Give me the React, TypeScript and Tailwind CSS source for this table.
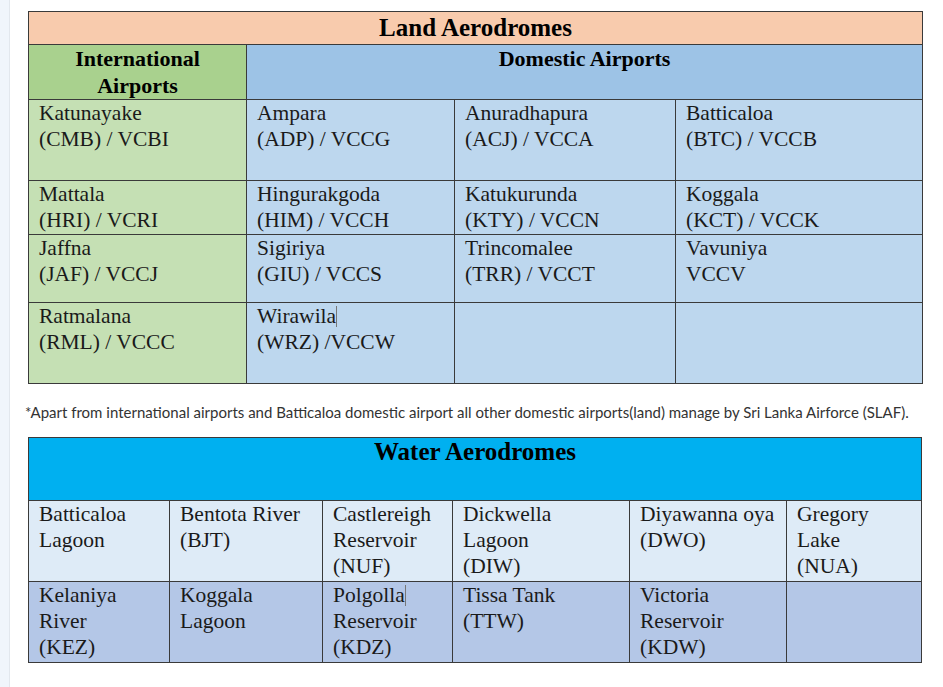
import React from 'react';

type Cell = { name: string; code: string; caret?: boolean };

const landRows: { intl: Cell; dom: (Cell | null)[]; h: string }[] = [
    {
        intl: { name: 'Katunayake', code: '(CMB) / VCBI' },
        dom: [
            { name: 'Ampara', code: '(ADP) / VCCG' },
            { name: 'Anuradhapura', code: '(ACJ) / VCCA' },
            { name: 'Batticaloa', code: '(BTC) / VCCB' },
        ],
        h: 'h-[81px]',
    },
    {
        intl: { name: 'Mattala', code: '(HRI) / VCRI' },
        dom: [
            { name: 'Hingurakgoda', code: '(HIM) / VCCH' },
            { name: 'Katukurunda', code: '(KTY) / VCCN' },
            { name: 'Koggala', code: '(KCT) / VCCK' },
        ],
        h: 'h-[54px]',
    },
    {
        intl: { name: 'Jaffna', code: '(JAF) / VCCJ' },
        dom: [
            { name: 'Sigiriya', code: '(GIU) / VCCS' },
            { name: 'Trincomalee', code: '(TRR) / VCCT' },
            { name: 'Vavuniya', code: 'VCCV' },
        ],
        h: 'h-[68px]',
    },
    {
        intl: { name: 'Ratmalana', code: '(RML) / VCCC' },
        dom: [{ name: 'Wirawila', code: '(WRZ) /VCCW', caret: true }, null, null],
        h: 'h-[81px]',
    },
];

const waterRows: (string[] | null)[][] = [
    [
        ['Batticaloa', 'Lagoon'],
        ['Bentota River', '(BJT)'],
        ['Castlereigh', 'Reservoir', '(NUF)'],
        ['Dickwella', 'Lagoon', '(DIW)'],
        ['Diyawanna oya', '(DWO)'],
        ['Gregory', 'Lake', '(NUA)'],
    ],
    [
        ['Kelaniya', 'River', '(KEZ)'],
        ['Koggala', 'Lagoon'],
        ['Polgolla|', 'Reservoir', '(KDZ)'],
        ['Tissa Tank', '(TTW)'],
        ['Victoria', 'Reservoir', '(KDW)'],
        null,
    ],
];

function Caret() {
    return <span className="inline-block w-px h-[21px] bg-[#777] align-[-4px]" />;
}

function Line({ text }: { text: string }) {
    if (text.endsWith('|')) {
        return <div>{text.slice(0, -1)}<Caret /></div>;
    }
    return <div>{text}</div>;
}

const serif = "font-['Liberation_Serif','Times_New_Roman',serif]";
const td = `${serif} border border-[#3a3a3a] align-top pl-[10px] pr-1 pt-0 text-[21.5px] leading-[26px] text-[#1a1a1a]`;
const head = `${serif} border border-[#3a3a3a] text-center font-bold text-black`;

export default function App() {
    return (
        <div className="flex min-h-[687px] bg-white">
            <div className="w-[10px] shrink-0 bg-[#f0f5fb] border-r border-[#e2e7ed]" />
            <div className="flex-1 pl-[18px] pt-[11px]">
                {/* Land aerodromes */}
                <table className="table-fixed border-collapse w-[894px]">
                    <colgroup>
                        <col className="w-[218px]" />
                        <col className="w-[208px]" />
                        <col className="w-[221px]" />
                        <col className="w-[247px]" />
                    </colgroup>
                    <tbody>
                        <tr>
                            <td colSpan={4} className={`${head} h-[33px] bg-[#f8cbad] text-[25px] leading-[32px]`}>
                                Land Aerodromes
                            </td>
                        </tr>
                        <tr>
                            <td className={`${head} h-[54px] bg-[#a9d18e] align-top text-[22px] leading-[27px]`}>
                                International
                                <br />
                                Airports
                            </td>
                            <td colSpan={3} className={`${head} bg-[#9dc3e6] align-top text-[22px] leading-[27px]`}>
                                Domestic Airports
                            </td>
                        </tr>
                        {landRows.map((r, i) => (
                            <tr key={i}>
                                <td className={`${td} ${r.h} bg-[#c5e0b4]`}>
                                    <div>{r.intl.name}</div>
                                    <div>{r.intl.code}</div>
                                </td>
                                {r.dom.map((c, j) => (
                                    <td key={j} className={`${td} bg-[#bdd7ee]`}>
                                        {c && (
                                            <>
                                                <div>
                                                    {c.name}
                                                    {c.caret && <Caret />}
                                                </div>
                                                <div>{c.code}</div>
                                            </>
                                        )}
                                    </td>
                                ))}
                            </tr>
                        ))}
                    </tbody>
                </table>

                <p className="mt-[20px] mb-[16px] -ml-[3px] text-[15px] leading-[17px] text-[#333] font-['Lato','Open_Sans',sans-serif]">
                    *Apart from international airports and Batticaloa domestic airport all other domestic airports(land) manage by Sri Lanka Airforce (SLAF).
                </p>

                {/* Water aerodromes */}
                <table className="table-fixed border-collapse w-[893px]">
                    <colgroup>
                        <col className="w-[141px]" />
                        <col className="w-[153px]" />
                        <col className="w-[130px]" />
                        <col className="w-[177px]" />
                        <col className="w-[157px]" />
                        <col className="w-[135px]" />
                    </colgroup>
                    <tbody>
                        <tr>
                            <td colSpan={6} className={`${head} h-[63px] bg-[#00b0f0] align-top pt-0 text-[25px] leading-[28px]`}>
                                Water Aerodromes
                            </td>
                        </tr>
                        {waterRows.map((row, i) => (
                            <tr key={i}>
                                {row.map((lines, j) => (
                                    <td key={j} className={`${td} h-[81px] ${i === 0 ? 'bg-[#deebf7]' : 'bg-[#b4c7e7]'}`}>
                                        {lines?.map((t, k) => <Line key={k} text={t} />)}
                                    </td>
                                ))}
                            </tr>
                        ))}
                    </tbody>
                </table>
            </div>
        </div>
    );
}
